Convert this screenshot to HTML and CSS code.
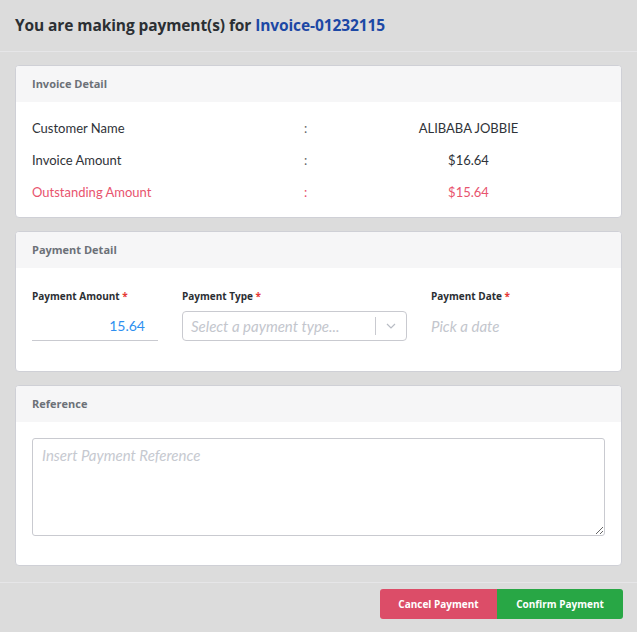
FILE: index.html
```html
<!DOCTYPE html>
<html>
<head>
<meta charset="utf-8">
<link rel="stylesheet" href="styles.css">
</head>
<body>
<div class="modal">
  <div class="modal-header">
    <h1 class="title">You are making payment(s) for <span class="inv">Invoice-01232115</span></h1>
  </div>
  <div class="modal-body">
    <section class="card">
      <div class="card-head">Invoice Detail</div>
      <div class="card-body detail">
        <div class="row"><span class="lbl">Customer Name</span><span class="colon">:</span><span class="val">ALIBABA JOBBIE</span></div>
        <div class="row"><span class="lbl">Invoice Amount</span><span class="colon">:</span><span class="val">$16.64</span></div>
        <div class="row red"><span class="lbl">Outstanding Amount</span><span class="colon">:</span><span class="val">$15.64</span></div>
      </div>
    </section>
    <section class="card">
      <div class="card-head">Payment Detail</div>
      <div class="card-body pay">
        <div class="field">
          <label class="flabel">Payment Amount <span class="req">*</span></label>
          <div class="amount">15.64</div>
        </div>
        <div class="field">
          <label class="flabel">Payment Type <span class="req">*</span></label>
          <div class="select">
            <span class="ph">Select a payment type...</span>
            <span class="sep"></span>
            <svg class="chev" width="10" height="6" viewBox="0 0 10 6"><path d="M1 1l4 4 4-4" fill="none" stroke="#b8bcc4" stroke-width="1.2"/></svg>
          </div>
        </div>
        <div class="field">
          <label class="flabel">Payment Date <span class="req">*</span></label>
          <div class="date">Pick a date</div>
        </div>
      </div>
    </section>
    <section class="card">
      <div class="card-head">Reference</div>
      <div class="card-body ref">
        <textarea class="ta" placeholder="Insert Payment Reference"></textarea>
      </div>
    </section>
  </div>
  <div class="modal-footer">
    <button class="btn cancel">Cancel Payment</button>
    <button class="btn confirm">Confirm Payment</button>
  </div>
</div>
</body>
</html>
```

FILE: styles.css
```css
html, body { margin: 0; padding: 0; }
body {
  background: #dcdcdc;
  font-family: "Lato", "Noto Sans", sans-serif;
  color: #343a40;
  width: 637px;
  height: 632px;
  overflow: hidden;
}
.modal { display: flex; flex-direction: column; }
.modal-header {
  height: 52px;
  border-bottom: 1px solid #e6e6e8;
  display: flex;
  align-items: center;
  padding: 0 15px;
  box-sizing: border-box;
}
.title {
  margin: 0;
  font-size: 15.5px;
  font-weight: 700;
  color: #2b2f33;
  font-family: "Open Sans", sans-serif;
  letter-spacing: -0.1px;
  position: relative;
  top: -1px;
}
.inv { color: #1c48a5; }
.modal-body {
  padding: 13px 15px 16px;
  display: flex;
  flex-direction: column;
  gap: 13px;
}
.card {
  background: #fff;
  border: 1px solid #cfd0d6;
  border-radius: 4px;
  overflow: hidden;
}
.card-head {
  background: #f6f6f7;
  height: 36px;
  line-height: 36px;
  padding: 0 16px;
  font-size: 11px;
  font-weight: 700;
  color: #6c7178;
  font-family: "Open Sans", sans-serif;
}
.detail { padding: 10px 16px 9px; }
.row {
  display: grid;
  grid-template-columns: 272px 28px 1fr;
  height: 32px;
  align-items: center;
  font-size: 13px;
  color: #2f3338;
}
.colon { color: #666; }
.val { text-align: center; }
.row.red, .row.red .colon { color: #e8546e; }
.pay {
  display: grid;
  grid-template-columns: 126px 225px 1fr;
  column-gap: 24px;
  padding: 20px 16px 30px;
}
.field { display: flex; flex-direction: column; }
.flabel {
  font-size: 10px;
  font-weight: 700;
  color: #2b2f33;
  font-family: "Open Sans", sans-serif;
  height: 16px;
  line-height: 16px;
  margin-bottom: 7px;
}
.req { color: #e53935; }
.amount {
  height: 29px;
  border-bottom: 1px solid #c9cad0;
  text-align: right;
  padding-right: 13px;
  font-size: 14px;
  line-height: 29px;
  color: #2e8ff0;
}
.select {
  height: 30px;
  border: 1px solid #c9cad0;
  border-radius: 4px;
  box-sizing: border-box;
  display: flex;
  align-items: center;
  padding-left: 8px;
}
.ph, .date {
  font-style: italic;
  color: #c3c6cd;
  font-size: 15px;
  flex: 1;
}
.sep { width: 1px; height: 18px; background: #c9cad0; }
.chev { margin: 0 10px 0 10px; }
.date { line-height: 30px; }
.ref { padding: 16px 16px 29px; }
.ta {
  display: block;
  width: 100%;
  height: 98px;
  box-sizing: border-box;
  border: 1px solid #c9cad0;
  border-radius: 3px;
  padding: 7px 9px;
  font-family: "Lato", "Noto Sans", sans-serif;
  font-size: 15px;
  resize: vertical;
  outline: none;
}
.ta::placeholder { font-style: italic; color: #c6c9d0; }
.modal-footer {
  border-top: 1px solid #e6e6e8;
  display: flex;
  justify-content: flex-end;
  padding: 6px 14px;
}
.btn {
  border: 0;
  height: 30px;
  color: #fff;
  font-size: 10px;
  font-weight: 700;
  font-family: "Open Sans", sans-serif;
  cursor: pointer;
}
.cancel {
  background: #dc4d68;
  width: 117px;
  border-radius: 3px 0 0 3px;
}
.confirm {
  background: #28a745;
  width: 126px;
  border-radius: 0 3px 3px 0;
}
```
